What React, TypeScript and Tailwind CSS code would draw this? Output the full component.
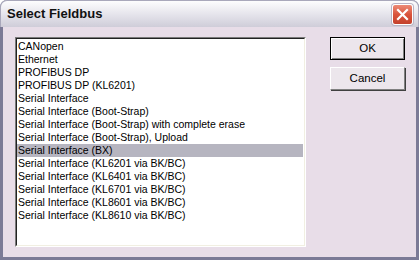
import React from 'react';

const items = [
  'CANopen',
  'Ethernet',
  'PROFIBUS DP',
  'PROFIBUS DP (KL6201)',
  'Serial Interface',
  'Serial Interface (Boot-Strap)',
  'Serial Interface (Boot-Strap) with complete erase',
  'Serial Interface (Boot-Strap), Upload',
  'Serial Interface (BX)',
  'Serial Interface (KL6201 via BK/BC)',
  'Serial Interface (KL6401 via BK/BC)',
  'Serial Interface (KL6701 via BK/BC)',
  'Serial Interface (KL8601 via BK/BC)',
  'Serial Interface (KL8610 via BK/BC)',
];

const CloseButton = () => (
  <div className="w-[21px] h-[21px] rounded-[3px] border border-white bg-gradient-to-b from-[#ec8a76] via-[#d9533c] to-[#c4402c] flex items-center justify-center shadow-[0_0_0_1px_#b9b4c4]">
    <svg width="13" height="13" viewBox="0 0 13 13">
      <path d="M2 2 L11 11 M11 2 L2 11" stroke="#ffffff" strokeWidth="2.2" strokeLinecap="square" />
    </svg>
  </div>
);

const Button = ({ label, isDefault }: { label: string; isDefault?: boolean }) => (
  <div
    className={`w-[75px] h-[23px] flex items-center justify-center bg-[#ece6ec] text-black text-[11.5px] ${
      isDefault
        ? 'border border-black shadow-[inset_1px_1px_0_#ffffff,inset_-1px_-1px_0_#808080]'
        : 'border-t border-l border-t-white border-l-white border-b border-r border-b-[#808080] border-r-[#808080] shadow-[1px_1px_0_#404040]'
    }`}
  >
    {label}
  </div>
);

export default function App() {
  return (
    <div
      className="w-[419px] h-[260px] overflow-hidden bg-white text-[10.5px]"
      style={{ fontFamily: '"Liberation Sans", Arial, sans-serif' }}
    >
      <div className="w-full h-full rounded-t-[7px] border-x-[3px] border-b-[3px] border-[#7b7a96] bg-[#e8dde8] flex flex-col">
        {/* Title bar */}
        <div className="h-[27px] -mx-[3px] pl-[6px] pr-[7px] rounded-t-[7px] bg-gradient-to-b from-[#fdfdfe] via-[#e6e5ec] to-[#cfcdd9] border-t border-x border-[#a9a8bb] flex items-center justify-between">
          <span className="font-bold text-[13px] text-[#111]">Select Fieldbus</span>
          <div className="mr-[-2px] mt-[1px]">
            <CloseButton />
          </div>
        </div>

        <div className="flex pl-[12px] pt-[10px] gap-[24px]">
          {/* List box */}
          <div className="w-[291px] h-[210px] border-t border-l border-t-[#7a7a7a] border-l-[#7a7a7a] border-b border-r border-b-white border-r-white">
            <div className="w-full h-full bg-white border-t border-l border-t-[#222] border-l-[#222] border-b border-r border-b-[#f1efe2] border-r-[#f1efe2] pt-[1px] pr-[1px]">
              {items.map((it) => (
                <div
                  key={it}
                  className={`h-[13px] leading-[13px] pl-[1px] whitespace-nowrap text-black ${
                    it === 'Serial Interface (BX)' ? 'bg-[#b6b5c0]' : ''
                  }`}
                >
                  {it}
                </div>
              ))}
            </div>
          </div>

          {/* Buttons */}
          <div className="flex flex-col gap-[7px]">
            <Button label="OK" isDefault />
            <Button label="Cancel" />
          </div>
        </div>
      </div>
    </div>
  );
}
